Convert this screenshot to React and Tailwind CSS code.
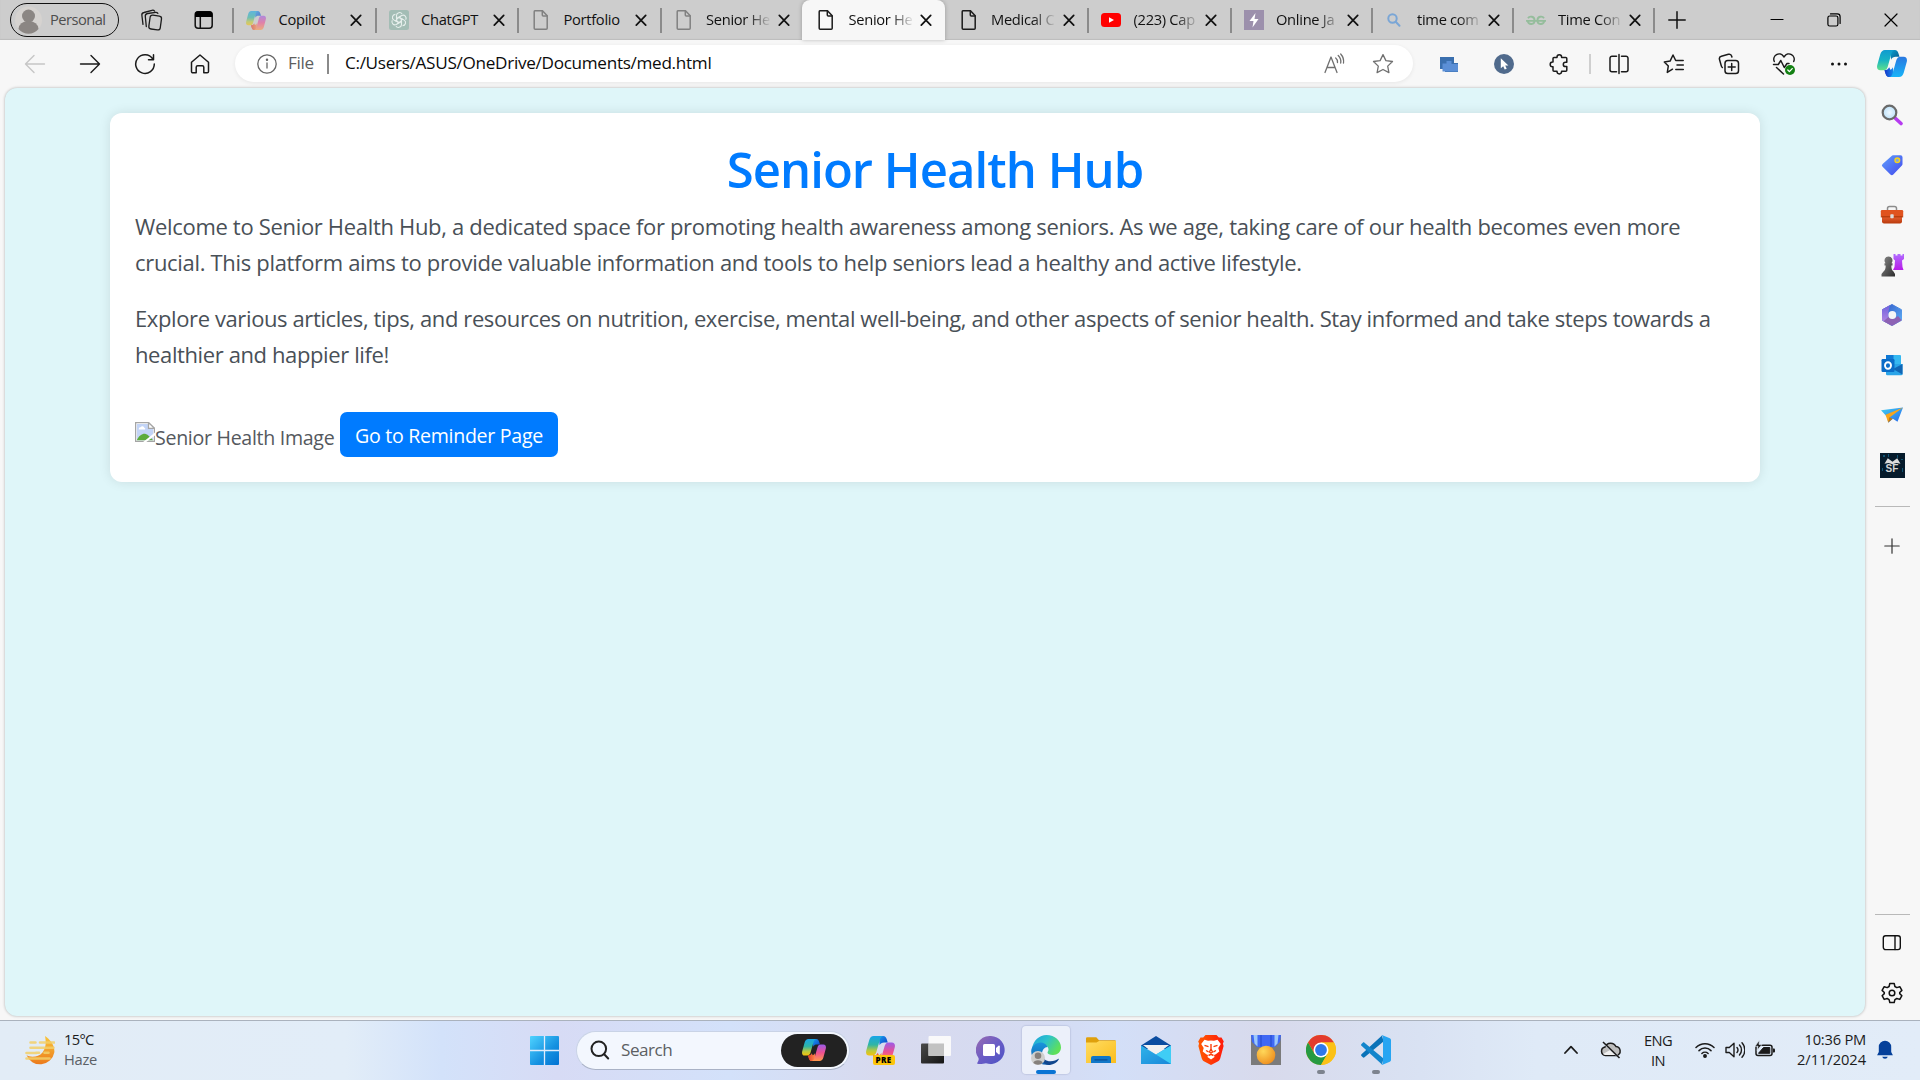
import React from 'react';

/* ---------- small building blocks ---------- */

function Line({ size = 24, box = 24, sw = 1.4, color = '#1b1b1b', children, className = '' }) {
  return (
    <svg
      width={size}
      height={size}
      viewBox={`0 0 ${box} ${box}`}
      fill="none"
      stroke={color}
      strokeWidth={sw}
      strokeLinecap="round"
      strokeLinejoin="round"
      className={`shrink-0 ${className}`}
    >
      {children}
    </svg>
  );
}

function Gradients() {
  return (
    <svg width="0" height="0" className="absolute">
      <defs>
        <linearGradient id="cpA" x1="0" y1="0" x2="0" y2="1">
          <stop offset="0" stopColor="#18a5e8" />
          <stop offset=".45" stopColor="#2fb5a5" />
          <stop offset=".75" stopColor="#b9c940" />
          <stop offset="1" stopColor="#f6c20b" />
        </linearGradient>
        <linearGradient id="cpB" x1="0" y1="0" x2="0" y2="1">
          <stop offset="0" stopColor="#9b5be8" />
          <stop offset=".5" stopColor="#ee5090" />
          <stop offset="1" stopColor="#ff9a4a" />
        </linearGradient>
        <linearGradient id="cpC" x1="0" y1="0" x2="1" y2="1">
          <stop offset="0" stopColor="#1b9cf0" />
          <stop offset="1" stopColor="#0b3fc4" />
        </linearGradient>
        <linearGradient id="cpD" x1="0" y1="0" x2="1" y2="0">
          <stop offset="0" stopColor="#e0402a" />
          <stop offset="1" stopColor="#ff8a4a" />
        </linearGradient>
        <linearGradient id="cbA" x1="0" y1="0" x2="0" y2="1">
          <stop offset="0" stopColor="#0f9bd0" />
          <stop offset=".5" stopColor="#17b3c4" />
          <stop offset="1" stopColor="#5fe08a" />
        </linearGradient>
        <linearGradient id="cbB" x1="0" y1="0" x2="0" y2="1">
          <stop offset="0" stopColor="#2a78e0" />
          <stop offset="1" stopColor="#18b4f8" />
        </linearGradient>
        <linearGradient id="cbC" x1="0" y1="0" x2="1" y2="1">
          <stop offset="0" stopColor="#0aa0d0" />
          <stop offset="1" stopColor="#08558a" />
        </linearGradient>
        <linearGradient id="cbD" x1="0" y1="0" x2="1" y2="0">
          <stop offset="0" stopColor="#1436c8" />
          <stop offset="1" stopColor="#1590f0" />
        </linearGradient>
        <linearGradient id="win" x1="0" y1="0" x2="1" y2="1">
          <stop offset="0" stopColor="#4fd3ff" />
          <stop offset=".6" stopColor="#1590e0" />
          <stop offset="1" stopColor="#0272d2" />
        </linearGradient>
        <linearGradient id="tag" x1="0" y1="0" x2="1" y2="1">
          <stop offset="0" stopColor="#5fa0fb" />
          <stop offset="1" stopColor="#4348ee" />
        </linearGradient>
        <linearGradient id="moon" x1="0" y1="0" x2="0" y2="1">
          <stop offset="0" stopColor="#f8c63c" />
          <stop offset="1" stopColor="#ec7a1c" />
        </linearGradient>
        <linearGradient id="box" x1="0" y1="0" x2="0" y2="1">
          <stop offset="0" stopColor="#f0683a" />
          <stop offset="1" stopColor="#b93a0c" />
        </linearGradient>
        <linearGradient id="pawn" x1="0" y1="0" x2="1" y2="1">
          <stop offset="0" stopColor="#8a8a8a" />
          <stop offset="1" stopColor="#2d2d2d" />
        </linearGradient>
        <linearGradient id="rook" x1="0" y1="0" x2="0" y2="1">
          <stop offset="0" stopColor="#b06cff" />
          <stop offset="1" stopColor="#b81ce8" />
        </linearGradient>
        <linearGradient id="plane" x1="0" y1="0" x2="1" y2="1">
          <stop offset="0" stopColor="#3fd0f4" />
          <stop offset="1" stopColor="#2a66ea" />
        </linearGradient>
        <linearGradient id="teams" x1="0" y1="0" x2="1" y2="1">
          <stop offset="0" stopColor="#9a6cb0" />
          <stop offset=".5" stopColor="#6a5cc6" />
          <stop offset="1" stopColor="#4b53c4" />
        </linearGradient>
        <linearGradient id="edgeA" x1="0" y1="0" x2="1" y2=".5">
          <stop offset="0" stopColor="#1c9fdc" />
          <stop offset=".5" stopColor="#2cc2cc" />
          <stop offset="1" stopColor="#5fe05a" />
        </linearGradient>
        <linearGradient id="edgeB" x1="0" y1="0" x2="0" y2="1">
          <stop offset="0" stopColor="#1a94dc" />
          <stop offset="1" stopColor="#0e5fae" />
        </linearGradient>
        <linearGradient id="folder" x1="0" y1="0" x2="1" y2="1">
          <stop offset="0" stopColor="#ffdc62" />
          <stop offset="1" stopColor="#fbbd1c" />
        </linearGradient>
        <linearGradient id="mail" x1="0" y1="0" x2="1" y2="1">
          <stop offset="0" stopColor="#35c6f0" />
          <stop offset="1" stopColor="#1484d8" />
        </linearGradient>
        <linearGradient id="brave" x1="0" y1="0" x2="1" y2="0">
          <stop offset="0" stopColor="#ff5a00" />
          <stop offset="1" stopColor="#ff1a0c" />
        </linearGradient>
        <radialGradient id="gold" cx=".35" cy=".3" r=".8">
          <stop offset="0" stopColor="#ffd85a" />
          <stop offset="1" stopColor="#ee8a1a" />
        </radialGradient>
        <radialGradient id="lens" cx=".5" cy=".5" r=".6">
          <stop offset="0" stopColor="#eef8ff" />
          <stop offset="1" stopColor="#b2dcf8" />
        </radialGradient>
        <linearGradient id="dark" x1="0" y1="0" x2="1" y2="1">
          <stop offset="0" stopColor="#4a4a4a" />
          <stop offset="1" stopColor="#151515" />
        </linearGradient>
        <linearGradient id="hexA" x1="0" y1="0" x2="0" y2="1">
          <stop offset="0" stopColor="#6f62dc" />
          <stop offset="1" stopColor="#b98ae4" />
        </linearGradient>
        <linearGradient id="hexB" x1="0" y1="0" x2="1" y2="1">
          <stop offset="0" stopColor="#2f58c8" />
          <stop offset="1" stopColor="#62b4f8" />
        </linearGradient>
      </defs>
    </svg>
  );
}

function CopilotMark({ w, h, blue = false, className = '' }) {
  const [a, b, c, d] = blue
    ? ['url(#cbA)', 'url(#cbB)', 'url(#cbC)', 'url(#cbD)']
    : ['url(#cpA)', 'url(#cpB)', 'url(#cpC)', 'url(#cpD)'];
  return (
    <svg width={w} height={h} viewBox="0 0 32 28" preserveAspectRatio="none" className={`shrink-0 ${className}`}>
      <path d="M14 0h5c2.200 0 3.200 1.400 3.900 3.600L24 7h-4c-2.500 0-4 .8-5 3z" fill={c} />
      <path d="M8.500 0H19c-2 .300-3 1.700-3.700 4L11.500 17c-.800 2.700-2 4-4.500 4H3.500C.500 21-.500 18.500.300 15.500L3.500 4.500C4.300 1.700 6 0 8.500 0z" fill={a} />
      <path d="M18 28h-5c-2.200 0-3.200-1.400-3.900-3.600L8 21c2.500 0 4-.8 5-3z" fill={d} />
      <path d="M18 28h-5c-2.200 0-3.200-1.400-3.900-3.600L8 21h4c2.500 0 4-.8 5-3z" fill={d} />
      <path d="M23.500 28H13c2-.300 3-1.700 3.700-4l3.800-13c.800-2.500 2-4 4.500-4h3.500c3 0 4 2.500 3.200 5.500l-3.200 11c-.800 2.800-2.500 4.500-5 4.500z" fill={b} />
    </svg>
  );
}

/* ---------- tab strip ---------- */

function PageIcon({ color = '#1b1b1b' }) {
  return (
    <Line size={20} box={20} sw={1.5} color={color}>
      <path d="M4 .8h7.500l4.700 5V18.200a1 1 0 0 1-1 1H4.200a1 1 0 0 1-1-1V1.800a1 1 0 0 1 .8-1z" />
      <path d="M11.300 1v4a1 1 0 0 0 1 1h3.700" />
    </Line>
  );
}

const favicons = {
  copilot: <CopilotMark w={20} h={19} className="opacity-60" />,
  gpt: (
    <svg width="20" height="20" viewBox="0 0 20 20">
      <rect width="20" height="20" rx="2.500" fill="#a3bdb5" />
      <g fill="none" stroke="#e6efec" strokeWidth="1.100">
        {[0, 60, 120, 180, 240, 300].map((r) => (
          <path key={r} transform={`rotate(${r} 10 10)`} d="M7.500 8.800V5.400a3 3 0 0 1 5.600-1.300M7.500 8.800l2.500-1.500 4.200 2.400" />
        ))}
      </g>
    </svg>
  ),
  page: <PageIcon color="#808080" />,
  pageDark: <PageIcon />,
  youtube: (
    <svg width="20" height="20" viewBox="0 0 20 20">
      <rect y="3" width="20" height="14" rx="3.500" fill="#f00" />
      <path d="M8 7.200v5.600l5-2.800z" fill="#fff" />
    </svg>
  ),
  bolt: (
    <svg width="20" height="20" viewBox="0 0 20 20">
      <rect width="20" height="20" fill="#9c90ac" />
      <path d="M11.500 3L5.500 11h4l-1 6.500 6-8.500h-4z" fill="#fff" />
    </svg>
  ),
  search: (
    <Line size={20} box={20} sw={2} color="#7aa6d6">
      <circle cx="7.500" cy="8.500" r="4.200" />
      <path d="M10.700 11.700l3.800 4" />
    </Line>
  ),
  gfg: (
    <svg width="20" height="20" viewBox="0 0 20 20" fill="none" stroke="#95bd9c" strokeWidth="1.900">
      <path d="M2 8.200c1.600-2.600 6.600-2 6.600 2.200 0 4.600-6 4.600-6.800.9M18 8.200c-1.600-2.600-6.600-2-6.600 2.200 0 4.600 6 4.600 6.800.9M0 10.900h20" />
    </svg>
  ),
};

const tabs = [
  { icon: 'copilot', title: 'Copilot', sep: true },
  { icon: 'gpt', title: 'ChatGPT', sep: true },
  { icon: 'page', title: 'Portfolio', sep: true },
  { icon: 'page', title: 'Senior He', sep: true, clip: true },
  { icon: 'pageDark', title: 'Senior He', clip: true, active: true },
  { icon: 'pageDark', title: 'Medical C', clip: true },
  { icon: 'youtube', title: '(223) Cap', sep: true, clip: true },
  { icon: 'bolt', title: 'Online Ja', sep: true, clip: true, narrow: true },
  { icon: 'search', title: 'time com', sep: true, clip: true, narrow: true },
  { icon: 'gfg', title: 'Time Con', sep: true, clip: true, narrow: true },
];

function Tab({ icon, title, sep, clip, active, narrow }) {
  return (
    <div className={`flex h-full shrink-0 items-center ${narrow ? 'w-[141px]' : 'w-[142.5px]'} ${active ? 'rounded-t-lg bg-[#f7f7f7] shadow-[0_0_4px_rgba(0,0,0,0.25)]' : ''}`}>
      <div className={`h-[25px] w-[2px] ${sep ? 'bg-[#8b8b8b]' : ''}`} />
      <div className="ml-[12px] flex w-5 justify-center">{favicons[icon]}</div>
      <div
        className={`ml-[12.5px] w-[64px] pb-[2px] text-[14.7px] leading-5 tracking-[-0.3px] whitespace-nowrap text-[#111] ${clip ? '[mask-image:linear-gradient(to_right,black_65%,transparent_102%)]' : ''}`}
      >
        {title}
      </div>
      <Line size={12} box={12} sw={1.700} color="#111" className={narrow ? 'ml-[6.500px]' : 'ml-[7.500px]'}>
        <path d="M1.300 1.300l9.400 9.900M10.700 1.300L1.300 11.200" />
      </Line>
    </div>
  );
}

function TabStrip() {
  return (
    <div className="flex h-10 shrink-0 items-center bg-[#cdcdcd] pl-[10px] shadow-[inset_0_-1px_1px_#bdbdbd]">
      <div className="flex h-[34px] w-[109px] items-center rounded-full border-[1.5px] border-[#111] pl-1">
        <svg width="27" height="28" viewBox="0 0 27 28" className="shrink-0">
          <circle cx="13.500" cy="14" r="13.500" fill="#d6d3d0" />
          <circle cx="13.500" cy="10" r="6.500" fill="#8b8683" />
          <path d="M3.500 23a10 8 0 0 1 20 0A13 13 0 0 1 3.500 23z" fill="#8b8683" />
        </svg>
        <span className="ml-2 pb-[2px] text-[14.700px] tracking-[-0.55px] text-[#4e4e4e]">Personal</span>
      </div>
      <div className="ml-[21px] flex w-6 justify-center">
        <Line size={24} sw={1.300}>
          <rect x="9.500" y="7.500" width="11.500" height="14" rx="2.500" transform="rotate(8 15 14)" />
          <path d="M6.300 18.500l-1-10A2.700 2.700 0 0 1 7.600 5.500l8-1.200a2.500 2.500 0 0 1 2.300 1" />
          <path d="M3 16.300L1.900 7.500A2.600 2.600 0 0 1 4 4.500l8-2.200a2.500 2.500 0 0 1 2.600.8" />
        </Line>
      </div>
      <svg width="20" height="20" viewBox="0 0 20 20" className="ml-[30px] shrink-0">
        <rect x="1.200" y="1.700" width="17" height="16.600" rx="3" fill="none" stroke="#111" strokeWidth="1.500" />
        <path d="M1 7V4.500a3.200 3.200 0 0 1 3.200-3.200h11a3.200 3.200 0 0 1 3.200 3.200V7z" fill="#000" />
        <path d="M6.300 7v11" stroke="#111" strokeWidth="1.500" />
      </svg>
      <div className="ml-[18px] flex h-full">
        {tabs.map((t, i) => (
          <Tab key={i} {...t} />
        ))}
      </div>
      <div className="h-[25px] w-[2px] bg-[#8b8b8b]" />
      <Line size={18} box={18} sw={1.500} color="#111" className="ml-[13px]">
        <path d="M9 .8v16.400M.8 9h16.400" />
      </Line>
      <div className="ml-auto flex h-full items-center pr-px">
        <div className="flex w-[57px] justify-center">
          <Line size={14} box={14} sw={1.200} color="#000">
            <path d="M1 6.500h12" />
          </Line>
        </div>
        <div className="flex w-[57px] justify-center">
          <Line size={14} box={14} sw={1.200} color="#000">
            <rect x=".9" y="3" width="10" height="10" rx="1.800" />
            <path d="M3.500.9h6.800a2.800 2.800 0 0 1 2.800 2.800v6.800" />
          </Line>
        </div>
        <div className="flex w-[57px] justify-center">
          <Line size={14} box={14} sw={1.200} color="#000">
            <path d="M1 1l12 12M13 1L1 13" />
          </Line>
        </div>
      </div>
    </div>
  );
}

/* ---------- toolbar ---------- */

function Slot({ w = 'w-[55px]', children }) {
  return <div className={`flex shrink-0 items-center justify-center ${w}`}>{children}</div>;
}

function Toolbar() {
  return (
    <div className="flex h-12 shrink-0 items-center pb-px pl-[7px]">
      <Slot>
        <Line size={22} box={22} color="#c6c6c6">
          <path d="M1.500 11h19M10 2.500L1.500 11l8.500 8.500" />
        </Line>
      </Slot>
      <Slot>
        <Line size={22} box={22}>
          <path d="M1.500 11h19M12 2.500l8.500 8.500-8.500 8.500" />
        </Line>
      </Slot>
      <Slot>
        <Line size={22} box={22} sw={1.500}>
          <path d="M18.800 6A9.300 9.300 0 1 0 20.300 11M19.500 1.800v5h-5" />
        </Line>
      </Slot>
      <Slot>
        <Line size={22} box={22} sw={1.500}>
          <path d="M2.500 9.300L11 2l8.500 7.300V18.500a1.300 1.300 0 0 1-1.300 1.300h-3.400v-5.600a1.500 1.500 0 0 0-1.500-1.500H8.700a1.500 1.500 0 0 0-1.500 1.500v5.600H3.800a1.300 1.300 0 0 1-1.300-1.300z" />
        </Line>
      </Slot>
      <div className="ml-[8px] flex h-[37px] w-[1178px] shrink-0 items-center rounded-full bg-white pl-[22px] shadow-[0_1px_4px_rgba(0,0,0,0.07)]">
        <Line size={20} box={20} sw={1.300} color="#666">
          <circle cx="10" cy="10" r="9.200" />
          <path d="M10 9v5" />
          <circle cx="10" cy="5.800" r=".6" fill="#666" />
        </Line>
        <span className="ml-[11px] pb-px text-[17.150px] tracking-[-0.3px] text-[#5e5e5e]">File</span>
        <div className="ml-[13px] h-5 w-[2px] bg-[#8a8a8a]" />
        <span className="ml-[16px] pb-px text-[17.150px] tracking-[-0.3px] text-[#0b0b0b]">C:/Users/ASUS/OneDrive/Documents/med.html</span>
        <div className="ml-auto flex pr-[6px]">
          <div className="flex w-[49px] justify-center">
            <Line size={22} box={22} color="#707070" sw={1.300}>
              <path d="M2 19.500L8 4l6 15.500M4.200 14.500h7.600" />
              <path d="M12.700 5a5 5 0 0 1 1.800 4.500M15.200 2.500a8.500 8.500 0 0 1 2.500 7.500M17.700 1a11 11 0 0 1 2.800 9" />
            </Line>
          </div>
          <div className="flex w-[49px] justify-center">
            <Line size={22} box={22} color="#707070" sw={1.300}>
              <path d="M11 1.600l2.900 6 6.600.900-4.800 4.600 1.200 6.500L11 16.500l-5.900 3.100 1.200-6.500L1.500 8.500l6.600-.900z" />
            </Line>
          </div>
        </div>
      </div>
      <div className="w-[8px] shrink-0" />
      <Slot>
        <svg width="20" height="20" viewBox="0 0 20 20">
          <path d="M1 3h14v6h4v9H6v-3H1z" fill="#3a6fae" />
          <path d="M3.500 9.500h4V7h5v3H19v7.500H3.500z" fill="#5b8fd6" />
        </svg>
      </Slot>
      <Slot>
        <svg width="20" height="20" viewBox="0 0 20 20">
          <circle cx="10" cy="10" r="10" fill="#506a8c" />
          <path d="M6.800 4.300v10l2.400-2 1.500 3.300 2-.9-1.500-3.200h3.200z" fill="#fff" />
        </svg>
      </Slot>
      <Slot>
        <Line size={22} box={22} sw={1.500}>
          <path d="M6 4.500h3V4a2.300 2.300 0 0 1 4.600 0v.5h4.200a1 1 0 0 1 1 1v3.700h-1.300a2.200 2.200 0 0 0 0 4.400h1.300v3.700a1 1 0 0 1-1 1h-4.200v.3a2.300 2.300 0 0 1-4.600 0v-.3H6a1 1 0 0 1-1-1v-3.600h-.5a2.300 2.300 0 0 1 0-4.600H5V5.500a1 1 0 0 1 1-1z" />
        </Line>
      </Slot>
      <div className="ml-[3px] h-5 w-[2px] shrink-0 bg-[#cfcfcf]" />
      <Slot>
        <Line size={22} box={22} sw={1.500}>
          <path d="M8.500 3.200H4A2 2 0 0 0 2 5.200v11.600a2 2 0 0 0 2 2h4.500M11 1.500v19M13.500 3.200H18a2 2 0 0 1 2 2v11.600a2 2 0 0 1-2 2h-4.500" />
        </Line>
      </Slot>
      <Slot>
        <Line size={22} box={22} sw={1.500}>
          <path d="M9.500 16.200l-5.200 3.200 1-6.400L1.300 9l5.800-.9L10 2l2.700 5.500h7.500M14 12h6.300M12.800 16.500h7.500" />
        </Line>
      </Slot>
      <Slot>
        <Line size={22} box={22} sw={1.500}>
          <rect x="7" y="7.500" width="13.500" height="13" rx="2.800" />
          <path d="M13.700 10.500v7M10.200 14h7" />
          <path d="M4.300 14.500a3 3 0 0 1-1-1.600L1.500 6.500A2.700 2.700 0 0 1 3.400 3.200l7-1.900a2.700 2.700 0 0 1 3.300 1.900l.2.800" />
        </Line>
      </Slot>
      <Slot>
        <svg width="24" height="24" viewBox="0 0 24 24" fill="none" stroke="#1b1b1b" strokeWidth="1.500" strokeLinecap="round" strokeLinejoin="round">
          <path d="M2.300 9.500a5.300 5.300 0 0 1 9.200-5.200l.5.600.5-.6a5.300 5.300 0 0 1 9.200 5.200M1.500 12.500h4.800l2.500-4 3.500 7 2.700-4h2M4.500 15.500l7 6.500" />
          <circle cx="18" cy="18" r="5" fill="#138013" stroke="none" />
          <path d="M15.800 18l1.600 1.600 2.800-3" stroke="#fff" strokeWidth="1.300" />
        </svg>
      </Slot>
      <Slot>
        <svg width="18" height="4" viewBox="0 0 18 4" fill="#111">
          <circle cx="2.500" cy="2" r="1.500" />
          <circle cx="9" cy="2" r="1.500" />
          <circle cx="15.500" cy="2" r="1.500" />
        </svg>
      </Slot>
      <Slot w="w-[52px]">
        <CopilotMark blue w={30} h={27} />
      </Slot>
    </div>
  );
}

/* ---------- page ---------- */

function BrokenImage() {
  return (
    <svg width="20" height="20" viewBox="0 0 16 16" className="shrink-0">
      <path d="M.5.5h10.300l4.700 4.500v10.500H.5z" fill="#fff" stroke="#a5a5a5" />
      <path d="M1.500 1.500h9v4h4v9h-13z" fill="#c3d4f6" />
      <path d="M3 5.500a1.300 1.300 0 0 1 1.500-1.300 1.700 1.700 0 0 1 3 .3 1 1 0 0 1 .5 1.500H3z" fill="#fff" />
      <path d="M1.500 14.500C3 11 6 9 8.500 9.500c2 .4 4 3 6 5z" fill="#5cab3a" />
      <path d="M10.800.5V5h4.700z" fill="#fff" stroke="#a5a5a5" />
      <path d="M16 8.300L6.500 16H9l7-5.300z" fill="#fff" />
    </svg>
  );
}

function HealthPage() {
  return (
    <div className="ml-[5px] h-[928px] w-[1860px] shrink-0 rounded-xl bg-[#dff6f9] px-[105px] pt-[25px] shadow-[0_0_3px_rgba(0,0,0,0.3)]">
      <main className="h-[369px] rounded-[12px] bg-white px-[25px] pt-[25px] shadow-[0_0_12px_rgba(0,0,0,0.1)]">
        <h1 className="pt-[2px] text-center text-[49px] leading-[58px] font-semibold tracking-[-0.94px] text-[#007bff]">Senior Health Hub</h1>
        <p className="mt-[10px] text-[22px] leading-[36px] tracking-[-0.32px] text-[#495057]">
          <span className="block whitespace-nowrap">
            Welcome to Senior Health Hub, a dedicated space for promoting health awareness among seniors. As we age, taking care of our health becomes even more
          </span>
          <span className="block whitespace-nowrap">
            crucial. This platform aims to provide valuable information and tools to help seniors lead a healthy and active lifestyle.
          </span>
        </p>
        <p className="mt-[20px] text-[22px] leading-[36px] tracking-[-0.39px] text-[#495057]">
          <span className="block whitespace-nowrap">
            Explore various articles, tips, and resources on nutrition, exercise, mental well-being, and other aspects of senior health. Stay informed and take steps towards a
          </span>
          <span className="block whitespace-nowrap">healthier and happier life!</span>
        </p>
        <div className="mt-[40px] flex items-start">
          <div className="mt-[10px] flex w-[205px] items-start">
            <BrokenImage />
            <span className="mt-[2px] text-[19.600px] leading-[28px] tracking-[-0.3px] whitespace-nowrap text-[#55595e]">Senior Health Image</span>
          </div>
          <button className="h-[45px] w-[218px] rounded-[7px] bg-[#007bff] pt-[2px] text-[19.600px] tracking-[-0.3px] text-white">
            Go to Reminder Page
          </button>
        </div>
      </main>
    </div>
  );
}

/* ---------- Edge side bar ---------- */

const sideIcons = [
  <svg key="s" width="22" height="22" viewBox="0 0 22 22">
    <path d="M13.500 13.500l6.500 6" stroke="#b63cf0" strokeWidth="3.600" strokeLinecap="round" />
    <circle cx="8.500" cy="8.500" r="6.800" fill="url(#lens)" stroke="#6a6a6a" strokeWidth="2.200" />
  </svg>,
  <svg key="t" width="22" height="22" viewBox="0 0 22 22">
    <path d="M12 1.300h7.500a2 2 0 0 1 2 2V10a2 2 0 0 1-.6 1.500l-8.600 8.900a2 2 0 0 1-2.900 0L1.600 12.800a2 2 0 0 1 0-2.900l9-8a2 2 0 0 1 1.400-.6z" fill="url(#tag)" />
    <circle cx="16.300" cy="6.300" r="2.300" fill="#7fa8e0" stroke="#f6d21c" strokeWidth="1.500" />
  </svg>,
  <svg key="b" width="24" height="22" viewBox="0 0 24 22">
    <path d="M7.500 6V4.500A2 2 0 0 1 9.500 2.500h5a2 2 0 0 1 2 2V6" fill="none" stroke="#8c8c8c" strokeWidth="1.500" />
    <path d="M2 11h20v6.500a2 2 0 0 1-2 2H4a2 2 0 0 1-2-2z" fill="url(#box)" />
    <rect x=".8" y="6" width="22.400" height="6.800" rx="1.200" fill="#e0531f" />
    <path d="M.8 12.200h22.400v1.200H.8z" fill="#b13a0c" />
    <rect x="10.300" y="10.300" width="3.400" height="4" rx=".8" fill="#dcdcdc" />
  </svg>,
  <svg key="c" width="24" height="24" viewBox="0 0 24 24">
    <path d="M13.500 1h2v1.500h2V1h3v1.500h2V1H24v5l-2 1.500.5 6.500 1 3H13l1.500-3 .5-6.500L13.500 6z" fill="url(#rook)" />
    <path d="M8.500 3.500a4 4 0 0 1 3 6.700h1v2.200h-1.200c0 3.200.7 4.800 2.200 6.200l1.500 2.400v2.500H1.500V21L3.500 18.600c1.500-1.400 2.200-3 2.200-6.200H4.500v-2.200h1a4 4 0 0 1 3-6.700z" fill="url(#pawn)" />
  </svg>,
  <svg key="m" width="22" height="24" viewBox="0 0 22 24">
    <path d="M11 1.500l9.500 5.200v10.600L11 22.500l-9.500-5.200V6.700z" fill="url(#hexB)" stroke="url(#hexB)" strokeLinejoin="round" />
    <path d="M9 2L1.500 6.200a1 1 0 0 0-.5.800v10.300l6.500 3.500V8.300z" fill="url(#hexA)" />
    <path d="M20.800 17.200L11.500 22.700a1 1 0 0 1-1 0L2.500 18.200 7.500 14l5 2 4.500-3z" fill="#8d62b4" />
    <circle cx="11.300" cy="12" r="3.900" fill="#f7f7f7" />
  </svg>,
  <svg key="o" width="22" height="22" viewBox="0 0 22 22">
    <rect x="5" y="1" width="15" height="12" rx="1" fill="#35b8f1" />
    <path d="M5 1h7.500v6H5z" fill="#0f78d4" />
    <path d="M5 10h16.500v10a1.300 1.300 0 0 1-1.300 1.300H6.300A1.300 1.300 0 0 1 5 20z" fill="#2aa4e8" />
    <path d="M21.500 10v10.500L12 15z" fill="#1066b5" />
    <rect x=".5" y="5" width="13" height="13" rx="1.200" fill="#0a6cc8" />
    <ellipse cx="7" cy="11.500" rx="3" ry="3.300" fill="none" stroke="#fff" strokeWidth="1.900" />
  </svg>,
  <svg key="p" width="22" height="22" viewBox="0 0 22 22">
    <path d="M0 6.300L22 3.500l-5.500 14.200-4.700-3-4.500 4-1.300-6z" fill="url(#plane)" />
    <path d="M22 3.500L4.500 10.800l2.800 7.900 1.500-5.500z" fill="#f9a51c" />
    <path d="M7.300 18.500l1-5.300 3.300 1.500z" fill="#c9780c" />
  </svg>,
  <div key="f" className="relative flex h-[25px] w-[25px] items-end justify-center bg-[#051a2b]">
    <svg width="25" height="25" viewBox="0 0 25 25" className="absolute inset-0">
      <path d="M3 2h2v2H3zM8 1h1v3H8zM17 2h1v3h-1zM21 6h2v1h-2zM2 15h1v3H2zM22 15h1v4h-1z" fill="#0f5474" />
      <path d="M4.500 10.800l3.300-5.500 4.700 3.500 4.700-3.500 3.300 5.500-4-.8-4 1.200-4-1.200z" fill="#dcdcdc" />
    </svg>
    <span className="relative pb-[4px] font-['Liberation_Sans',sans-serif] text-[10px] leading-[10px] font-bold text-[#d5d5d5]">SF</span>
  </div>,
];

function SideBar() {
  return (
    <aside className="flex w-[54px] flex-col items-center pt-[2px]">
      {sideIcons.map((ic, i) => (
        <div key={i} className="flex h-[50px] shrink-0 items-center justify-center">
          {ic}
        </div>
      ))}
      <div className="mt-[16px] h-px w-[35px] shrink-0 bg-[#b9b9b9]" />
      <div className="mt-[14px] flex h-[50px] items-center">
        <Line size={16} box={16} sw={1.200} color="#333">
          <path d="M8 .8v14.400M.8 8h14.400" />
        </Line>
      </div>
      <div className="mt-auto h-px w-[35px] shrink-0 bg-[#b9b9b9]" />
      <div className="mt-[3px] flex h-[50px] items-center">
        <Line size={20} box={20} sw={1.400} color="#111">
          <rect x="1.300" y="2.800" width="17" height="13.800" rx="2.300" />
          <path d="M13 3v13.500" />
        </Line>
      </div>
      <div className="mb-[2px] flex h-[50px] items-center">
        <Line size={22} box={22} sw={1.500} color="#111">
          <circle cx="11" cy="11" r="2.800" />
          <path d="M8.800 1.500h4.400l.7 3 1.900 1.100 3-.9 2.100 3.700-2.200 2.100v1.100l2.200 2.100-2.100 3.700-3-.9-1.900 1.100-.7 2.900H8.800l-.7-2.900-1.900-1.100-3 .9-2.100-3.700 2.200-2.100v-1.100L1.100 8.400l2.100-3.700 3 .9 1.900-1.100z" />
        </Line>
      </div>
    </aside>
  );
}

/* ---------- task bar ---------- */

const apps = [
  {
    id: 'pre',
    icon: (
      <div className="relative h-[30px] w-[30px]">
        <CopilotMark w={29} h={26} className="mt-px" />
        <span className="absolute bottom-0 left-[7px] flex h-[10px] w-[22px] items-center justify-center rounded-[2px] bg-[#fdc50a] text-[8px] font-extrabold tracking-[0.3px] text-black">PRE</span>
      </div>
    ),
  },
  {
    id: 'tasks',
    icon: (
      <svg width="30" height="30" viewBox="0 0 30 30">
        <rect x="0" y="8.500" width="23" height="20" rx="1" fill="url(#dark)" />
        <rect x="7.500" y="1" width="22.500" height="20" rx="1" fill="#fafafa" opacity=".97" />
        <path d="M7.500 8.500H23V21H7.500z" fill="#c2c2c2" />
      </svg>
    ),
  },
  {
    id: 'chat',
    icon: (
      <svg width="30" height="30" viewBox="0 0 30 30">
        <path d="M15 1a14 14 0 1 1-5 27.200c-2.500.6-6 1.200-8.500.6-.6-.2-.4-1 0-1.400 1-1.500 1.500-2.800 1-4.400A14 14 0 0 1 15 1z" fill="url(#teams)" />
        <rect x="7" y="9" width="12" height="12" rx="1.500" fill="#fff" />
        <path d="M20 13l2.500-2.300c.6-.5 1.300-.2 1.300.6v7.400c0 .8-.7 1.100-1.300.6L20 17z" fill="#fff" />
      </svg>
    ),
  },
  {
    id: 'edge',
    active: true,
    icon: (
      <svg width="30" height="30" viewBox="0 0 30 30">
        <path d="M1 14C2 5.500 8.500 0 15.500 0 24 0 30 6 30 12.500c0 4.500-3.500 7.500-8 7.500-3.500 0-5.500-1.300-5.500-2.500 0-.8 1-1.300 1-3 0-2.500-3-5.500-7.500-5.500C5.500 9 2.500 11 1 14z" fill="url(#edgeA)" />
        <path d="M.2 16C.5 11 5 7.500 9.500 7.500c3 0 6 1.500 7 4.500-3 0-5.500 3-5.500 7 0 5 4 9 8.500 10.500C9 31.500 0 25 .2 16z" fill="url(#edgeB)" />
        <path d="M11 19c0 4.500 4 7.300 8.500 7.300 3.500 0 6-1.300 7.500-2.300.6-.4 1 .1.600.8-1.700 2.700-5 4.700-8.600 5.200-5 .3-9-4-9-8.500z" fill="#11478e" />
        <circle cx="7" cy="23" r="7" fill="#cfcfcd" />
        <circle cx="7" cy="20.800" r="3.300" fill="#85807c" />
        <path d="M2.300 28a4.800 3.500 0 0 1 9.400 0 7 7 0 0 1-9.400 0z" fill="#85807c" />
      </svg>
    ),
  },
  {
    id: 'files',
    icon: (
      <svg width="30" height="30" viewBox="0 0 30 30">
        <path d="M0 3.500A1.300 1.300 0 0 1 1.300 2.200h9l2.700 3h15.700A1.300 1.300 0 0 1 30 6.500V12H0z" fill="#dfa00c" />
        <path d="M0 7.500h10.500L13 6h17v22H0z" fill="url(#folder)" />
        <path d="M5 28v-5a2 2 0 0 1 2-2h16a2 2 0 0 1 2 2v5z" fill="#1177c8" />
        <path d="M9 24.800h12" stroke="#0b4f94" strokeWidth="1.300" strokeLinecap="round" />
      </svg>
    ),
  },
  {
    id: 'mail',
    icon: (
      <svg width="30" height="30" viewBox="0 0 30 30">
        <path d="M0 10.500L15 1l15 9.500V14H0z" fill="#0b4da0" />
        <path d="M2 10h26L15 20z" fill="#f1f1f1" />
        <path d="M0 10.500l15 9 15-9V29H0z" fill="url(#mail)" />
        <path d="M0 10.500L30 29H0z" fill="#2590dc" opacity=".35" />
        <path d="M30 10.500L15 19.500 30 29z" fill="#3fcdf5" />
      </svg>
    ),
  },
  {
    id: 'brave',
    icon: (
      <svg width="30" height="30" viewBox="0 0 30 30">
        <path d="M9.500 0h11l2.300 2.600 2.700-.2 2.300 4-.9 2.200.7 2.300-3.300 12.300c-.5 1.700-1.300 2.500-2.600 3.400L15 30l-6.700-3.400c-1.300-.9-2.100-1.700-2.600-3.400L2.400 10.900l.7-2.300-.9-2.200 2.300-4 2.700.2z" fill="url(#brave)" />
        <path d="M15 5.500l3 .3 3.500-1 3.300 4.200-2.500 4 1 3.500-3.500 2.800-1.800.7.500 2L15 24.500 11.500 22l.5-2-1.800-.7-3.500-2.800 1-3.500-2.500-4 3.300-4.200 3.500 1z" fill="#fff" />
        <path d="M15 9v5l-1.500 3 1.500 1 1.500-1-1.500-3M8.500 10.300l4 1.300M21.500 10.300l-4 1.300M10 15.500l2.500 1.300M20 15.500l-2.500 1.300M12.500 20.500L15 19.300l2.500 1.200" fill="none" stroke="#fb3d09" strokeWidth="1.400" />
      </svg>
    ),
  },
  {
    id: 'medal',
    icon: (
      <svg width="30" height="30" viewBox="0 0 30 30">
        <rect width="30" height="30" fill="#7b7b7b" />
        <path d="M0 0h30l-1 7-5 5H6L1 7z" fill="#3f68f4" />
        <path d="M2.500 0h4v11.500l-3-3zM27.500 0h-4v11.500l3-3z" fill="#9cc8fa" />
        <path d="M10 0v11.500M20 0v11.500" stroke="#2448c8" />
        <circle cx="15" cy="20" r="9.300" fill="url(#gold)" />
      </svg>
    ),
  },
  {
    id: 'chrome',
    dot: true,
    icon: (
      <svg width="30" height="30" viewBox="0 0 30 30">
        <circle cx="15" cy="15" r="15" fill="#fbc116" />
        <path d="M15 7.500h13A15 15 0 0 0 2 7.500l6.500 11z" fill="#e33b2e" />
        <path d="M2 7.500A15 15 0 0 0 15 30l6.500-11.300L8.500 18.700z" fill="#269a42" />
        <path d="M15 7.500h13A15 15 0 0 1 15 30l6.500-11.300z" fill="#fbc116" />
        <circle cx="15" cy="15" r="7.500" fill="#fff" />
        <circle cx="15" cy="15" r="5.900" fill="#2f78ea" />
      </svg>
    ),
  },
  {
    id: 'code',
    dot: true,
    icon: (
      <svg width="30" height="30" viewBox="0 0 30 30">
        <path d="M22.500 6.500L3.500 22.300c-.5.500-1.200.5-1.700 0L.5 21c-.6-.5-.6-1.300 0-1.800L21 .6z" fill="#0a72b8" />
        <path d="M22.500 23.500L3.500 7.700c-.5-.5-1.200-.5-1.700 0L.5 9c-.6.5-.6 1.300 0 1.800L21 29.400z" fill="#1285cc" />
        <path d="M21.500.2l7.300 3c.8.400 1.200.9 1.200 1.700v20.200c0 .8-.4 1.300-1.200 1.700l-7.300 3c-.6.200-1 0-.7-.6.800-.4 1.200-1 1.200-2V2.800c0-1-.4-1.600-1.200-2-.2-.6.100-.8.700-.6z" fill="#27a5f2" />
      </svg>
    ),
  },
];

function TaskBar() {
  return (
    <footer className="flex h-[60px] items-center border-t border-[#aab2bd] bg-[linear-gradient(90deg,#e2ecf6_0%,#e2edf8_18%,#d3e2fa_23%,#d7dbf5_29%,#d3e1fa_38%,#d8daee_46%,#d5dbf2_54%,#d3dff8_58%,#d8daec_66%,#d9e2f3_74%,#dfeaf7_80%,#e2ecf8_100%)] pb-px text-[#1c1c1c]">
      <div className="flex w-[530px] shrink-0 items-center pl-[25px]">
        <svg width="30" height="30" viewBox="0 0 30 30">
          <path d="M20 1c5 3.500 10 9 9.300 16.500A14.500 14.500 0 0 1 1.500 20c3 2.500 12 2.500 16-2.500S21 6 20 1z" fill="url(#moon)" />
          <path d="M5.500 7.500h5M15 7.500h14M5.500 12.800h23M11 17.800h3M19.500 17.800h4M1.500 18h10M1.500 23.500h23" stroke="#f3d06a" strokeWidth="2.600" strokeLinecap="round" opacity=".85" />
        </svg>
        <div className="ml-[9px] pb-[3px] text-[14.700px] leading-[20px]">
          <div className="tracking-[-0.7px]">15°C</div>
          <div className="tracking-[-0.28px] text-[#5b6066]">Haze</div>
        </div>
      </div>
      <svg width="29" height="29" viewBox="0 0 29 29" className="shrink-0" fill="url(#win)">
        <path d="M0 1a1 1 0 0 1 1-1h27a1 1 0 0 1 1 1v27a1 1 0 0 1-1 1H1a1 1 0 0 1-1-1z" />
        <path d="M14.500 0v29M0 14.500h29" stroke="#e2ecfb" strokeWidth="1.300" />
      </svg>
      <div className="ml-[17px] flex h-[39px] w-[274px] shrink-0 items-center rounded-full border border-[#c9d3e6] border-b-[#a9b2c6] bg-[#f3f7fe] pr-[2px] pl-[13px]">
        <Line size={20} box={20} sw={2} color="#222">
          <circle cx="8.800" cy="8.800" r="7.300" />
          <path d="M14.200 14.200l4 4.300" />
        </Line>
        <span className="ml-[11px] text-[17.150px] tracking-[-0.5px] text-[#5c5f63]">Search</span>
        <div className="ml-auto flex h-[33px] w-[66px] items-center justify-center rounded-full bg-[#222]">
          <CopilotMark w={24} h={22} />
        </div>
      </div>
      <div className="ml-[3px] flex">
        {apps.map((a) => (
          <div key={a.id} className="flex w-[55px] shrink-0 justify-center">
            <div className={`relative flex h-12 w-12 items-center justify-center rounded ${a.active ? 'bg-[#ecf0fa] shadow-[0_0_1px_1px_rgba(160,170,200,0.35)]' : ''}`}>
              {a.icon}
              {a.active && <span className="absolute bottom-0 left-[14px] h-[4px] w-5 rounded-full bg-[#0a74d4]" />}
              {a.dot && <span className="absolute bottom-0 left-5 h-[4px] w-2 rounded-full bg-[#7d838e]" />}
            </div>
          </div>
        ))}
      </div>
      <div className="ml-auto flex items-center pr-[27px]">
        <Line size={14} box={14} sw={1.800} className="mr-[22px]">
          <path d="M1 10l6-6.300L13 10" />
        </Line>
        <svg width="22" height="18" viewBox="0 0 22 18" className="mr-[22px] shrink-0">
          <path d="M5.500 14.500a4.300 4.300 0 0 1-.5-8.500A6 6 0 0 1 16 5.500a4.600 4.600 0 0 1 .8 9z" fill="#bdbdbd" stroke="#1b1b1b" strokeWidth="1.500" />
          <path d="M3 13l8-4.500 7 5.500H5z" fill="#f0f0f0" />
          <path d="M2.500 1.500l16.500 15" stroke="#e2ecf8" strokeWidth="1.500" />
          <path d="M3 1l16.500 16" stroke="#1b1b1b" strokeWidth="1.600" />
        </svg>
        <div className="mr-[23px] pb-px text-center text-[14.700px] leading-[20px] tracking-[-0.6px]">
          <div>ENG</div>
          <div>IN</div>
        </div>
        <Line size={20} box={20} sw={1.500} className="mr-[10px]">
          <path d="M1 7.500a12.700 12.700 0 0 1 18 0M4 10.600a8.500 8.500 0 0 1 12 0M6.900 13.500a4.500 4.500 0 0 1 6.200 0" />
          <circle cx="10" cy="16" r="1.200" fill="#1b1b1b" />
        </Line>
        <Line size={20} box={20} sw={1.400} className="mr-[10px]">
          <path d="M1 7.500h3.300L9 3.300v13.400L4.300 12.500H1zM12 7.500a4 4 0 0 1 0 5M14.500 5a7.300 7.300 0 0 1 0 10M17 2.800a10.500 10.500 0 0 1 0 14.400" />
        </Line>
        <svg width="20" height="20" viewBox="0 0 20 20" className="mr-[20px] shrink-0">
          <rect x="1" y="5.200" width="16" height="10.300" rx="2" fill="none" stroke="#1b1b1b" strokeWidth="1.500" />
          <path d="M3.500 13.300L8.500 7.500h6.300v5.800z" fill="#1b1b1b" stroke="#1b1b1b" />
          <path d="M18 8.500h1a1 1 0 0 1 1 1v2a1 1 0 0 1-1 1h-1z" fill="#1b1b1b" />
          <path d="M4.500 0L0 6.300h3l-.8 4L7 4.500H4z" fill="#1b1b1b" stroke="#e2ecf8" strokeWidth=".7" />
        </svg>
        <div className="w-[71px] pb-[3px] text-right text-[14.700px] leading-[20px] whitespace-nowrap">
          <div className="tracking-[-0.23px]">10:36 PM</div>
          <div className="tracking-[-0.06px]">2/11/2024</div>
        </div>
        <svg width="16" height="20" viewBox="0 0 16 20" className="ml-[11px] shrink-0" fill="#05409a">
          <path d="M8 .8a6.200 6.200 0 0 1 6.200 6.200v5l1.700 3.300H.1L1.800 12V7A6.200 6.200 0 0 1 8 .8zM5.200 16.700h5.600a2.900 2.900 0 0 1-5.600 0z" />
        </svg>
      </div>
    </footer>
  );
}

export default function App() {
  return (
    <div className="flex h-[1080px] w-[1920px] flex-col overflow-hidden bg-[#f7f7f7] font-['Open_Sans','Noto_Sans',sans-serif]">
      <Gradients />
      <TabStrip />
      <Toolbar />
      <div className="flex h-[932px] shrink-0">
        <HealthPage />
        <SideBar />
      </div>
      <TaskBar />
    </div>
  );
}
